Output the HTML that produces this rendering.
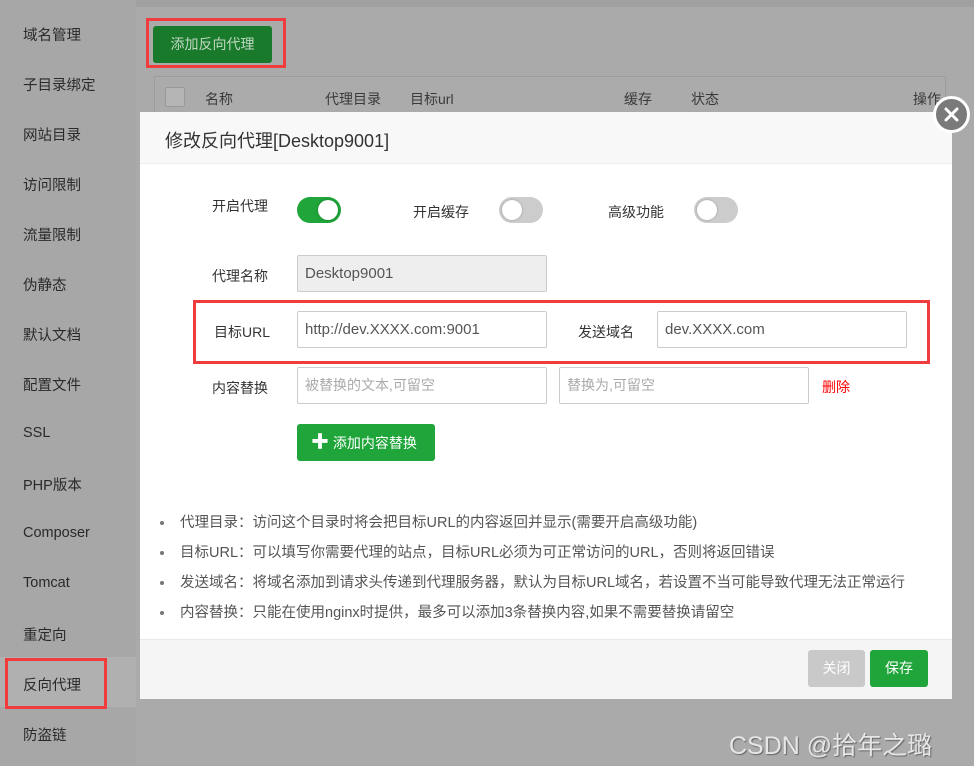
<!DOCTYPE html>
<html><head><meta charset="utf-8"><style>
*{margin:0;padding:0;box-sizing:border-box}
body{width:974px;height:766px;overflow:hidden;background:#aaaaaa;font-family:"Liberation Sans","Noto Sans CJK SC",sans-serif;position:relative;color:#333}
.a{position:absolute}
.side{left:0;top:0;width:136px;height:766px;background:#a7a7a7}
.side div{position:absolute;left:23px;font-size:14.5px;color:#2a2a2a}
.topbar{left:0;top:0;width:974px;height:7px;background:#a0a0a0}
.inp{position:absolute;height:37px;border:1px solid #ccc;background:#fff;font-size:15px;color:#555;padding-left:7px;line-height:35px;border-radius:2px}
.lbl{position:absolute;font-size:14px;color:#333}
.sw{position:absolute;width:44px;height:26px;border-radius:13px;background:#ccc}
.sw i{position:absolute;top:3px;width:20px;height:20px;border-radius:10px;background:#fff;box-shadow:0 0 2px rgba(0,0,0,.3)}
.tip{position:absolute;left:160px;font-size:14.5px;color:#555;white-space:nowrap}
.tip b{display:inline-block;width:4px;height:4px;border-radius:2px;background:#777;margin-right:16px;vertical-align:middle}
</style></head><body>
<div class="a topbar"></div>
<div class="a side">
<div style="top:24px">域名管理</div>
<div style="top:74px">子目录绑定</div>
<div style="top:124px">网站目录</div>
<div style="top:174px">访问限制</div>
<div style="top:224px">流量限制</div>
<div style="top:274px">伪静态</div>
<div style="top:324px">默认文档</div>
<div style="top:374px">配置文件</div>
<div style="top:425px">SSL</div>
<div style="top:474px">PHP版本</div>
<div style="top:525px">Composer</div>
<div style="top:575px">Tomcat</div>
<div style="top:624px">重定向</div>
<div style="left:0;top:657px;width:136px;height:50px;background:#b0b0b0"></div>
<div style="top:674px">反向代理</div>
<div style="top:724px">防盗链</div>
</div>
<div class="a" style="left:5px;top:658px;width:102px;height:51px;border:3px solid #f03c3c"></div>
<div class="a" style="left:153px;top:26px;width:119px;height:37px;background:#1a7a2c;border-radius:3px;color:#bfd8c2;font-size:14px;text-align:center;line-height:37px">添加反向代理</div>
<div class="a" style="left:146px;top:18px;width:140px;height:50px;border:3px solid #f03c3c"></div>
<div class="a" style="left:154px;top:76px;width:792px;height:40px;border:1px solid #9c9c9c;background:#ababab"></div>
<div class="a" style="left:165px;top:87px;width:20px;height:20px;border:1px solid #999;border-radius:2px;background:#b5b5b5"></div>
<div class="a" style="left:205px;top:89px;font-size:14px;color:#3a3a3a">名称</div>
<div class="a" style="left:325px;top:89px;font-size:14px;color:#3a3a3a">代理目录</div>
<div class="a" style="left:410px;top:89px;font-size:14px;color:#3a3a3a">目标url</div>
<div class="a" style="left:624px;top:89px;font-size:14px;color:#3a3a3a">缓存</div>
<div class="a" style="left:691px;top:89px;font-size:14px;color:#3a3a3a">状态</div>
<div class="a" style="left:913px;top:89px;font-size:14px;color:#3a3a3a">操作</div>

<div class="a" style="left:140px;top:112px;width:812px;height:587px;background:#fff">
 <div class="a" style="left:0;top:0;width:812px;height:52px;background:#f8f8f8;border-bottom:1px solid #eee"></div>
 <div class="a" style="left:25px;top:15px;font-size:18px;color:#333">修改反向代理[Desktop9001]</div>
 <div class="a" style="left:0;top:527px;width:812px;height:60px;background:#f4f5f4;border-top:1px solid #e8e8e8"></div>
 <div class="a" style="left:668px;top:538px;width:57px;height:37px;background:#c9c9c9;border-radius:3px;color:#fff;font-size:14px;text-align:center;line-height:37px">关闭</div>
 <div class="a" style="left:730px;top:538px;width:58px;height:37px;background:#20a53a;border-radius:3px;color:#fff;font-size:14px;text-align:center;line-height:37px">保存</div>
</div>
<div class="a" style="left:933px;top:96px;width:37px;height:37px;border-radius:19px;background:#7a7a7a;border:3px solid #fff"><svg width="31" height="31" style="position:absolute;left:0;top:0"><path d="M10 10L21 21M21 10L10 21" stroke="#fff" stroke-width="3" stroke-linecap="round"/></svg></div>

<div class="lbl" style="left:212px;top:196px">开启代理</div>
<div class="sw" style="left:297px;top:197px;background:#20a53a"><i style="left:21px"></i></div>
<div class="lbl" style="left:413px;top:202px">开启缓存</div>
<div class="sw" style="left:499px;top:197px"><i style="left:3px"></i></div>
<div class="lbl" style="left:608px;top:202px">高级功能</div>
<div class="sw" style="left:694px;top:197px"><i style="left:3px"></i></div>

<div class="lbl" style="left:212px;top:266px">代理名称</div>
<div class="inp" style="left:297px;top:255px;width:250px;background:#eee">Desktop9001</div>
<div class="lbl" style="left:214px;top:322px">目标URL</div>
<div class="inp" style="left:297px;top:311px;width:250px">http://dev.XXXX.com:9001</div>
<div class="lbl" style="left:578px;top:322px">发送域名</div>
<div class="inp" style="left:657px;top:311px;width:250px">dev.XXXX.com</div>
<div class="a" style="left:193px;top:300px;width:737px;height:64px;border:3px solid #f03c3c"></div>
<div class="lbl" style="left:212px;top:378px">内容替换</div>
<div class="inp" style="left:297px;top:367px;width:250px;color:#aaa;font-size:14px">被替换的文本,可留空</div>
<div class="inp" style="left:559px;top:367px;width:250px;color:#aaa;font-size:14px">替换为,可留空</div>
<div class="lbl" style="left:822px;top:377px;color:#f00">删除</div>
<div class="a" style="left:297px;top:424px;width:138px;height:37px;background:#20a53a;border-radius:3px;color:#fff;font-size:14px;line-height:37px;padding-left:14px"><b style="font-size:18px">✚</b> 添加内容替换</div>

<div class="tip" style="top:511px"><b></b>代理目录：访问这个目录时将会把目标URL的内容返回并显示(需要开启高级功能)</div>
<div class="tip" style="top:541px"><b></b>目标URL：可以填写你需要代理的站点，目标URL必须为可正常访问的URL，否则将返回错误</div>
<div class="tip" style="top:571px"><b></b>发送域名：将域名添加到请求头传递到代理服务器，默认为目标URL域名，若设置不当可能导致代理无法正常运行</div>
<div class="tip" style="top:601px"><b></b>内容替换：只能在使用nginx时提供，最多可以添加3条替换内容,如果不需要替换请留空</div>

<div class="a" style="left:729px;top:726px;font-size:25px;color:#e6e6e6;text-shadow:1px 1px 1px #666">CSDN @拾年之璐</div>
</body></html>
